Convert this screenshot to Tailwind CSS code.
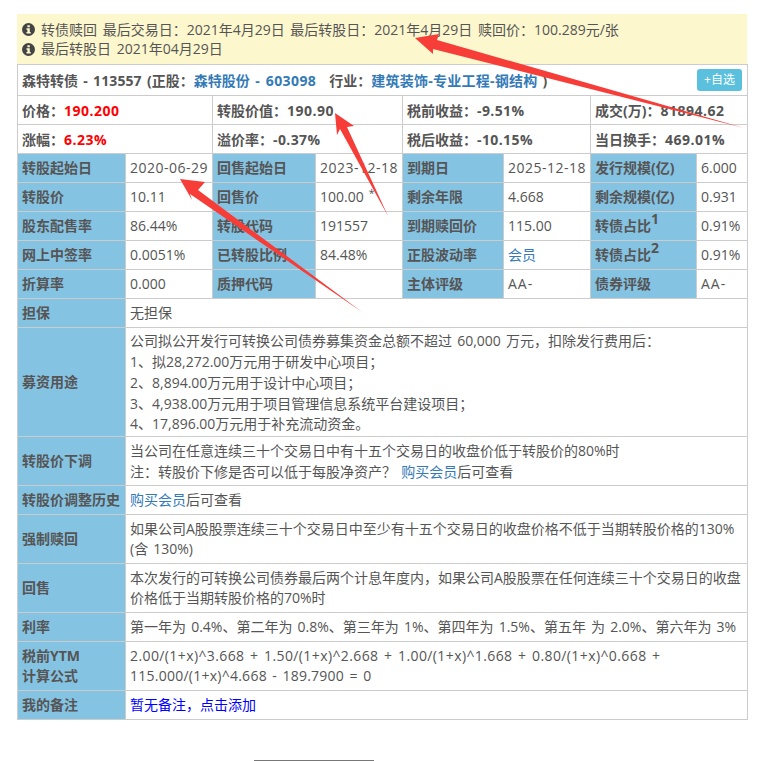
<!DOCTYPE html>
<html lang="zh-CN">
<head>
  <meta charset="UTF-8">
  <title>森特转债</title>
  <script src="https://cdn.jsdelivr.net/npm/@tailwindcss/browser@4"></script>
</head>
<body class="bg-white">
  <div class="relative h-[761px] overflow-hidden pt-[14px] pl-[17px] pr-[25px] font-['Open_Sans','Noto_Sans_CJK_SC',sans-serif] text-[14px] leading-[20px] text-[#555] [word-spacing:1.5px]">

    <!-- 公告 -->
    <div class="h-[50px] bg-[#fdf7cd] pl-[5px] pt-[5px] leading-[20px] [word-spacing:2px]">
      <div class="flex items-center gap-[6px] h-[20px]">
        <svg class="w-[13px] h-[13px]" viewBox="0 0 14 14"><circle cx="7" cy="7" r="7" fill="#444"/><rect x="5.8" y="2.4" width="2.6" height="2.2" fill="#fdf7cd"/><path d="M4.8 5.6h3.6v4.2h1v1.6H4.8V9.8h1V7.2h-1z" fill="#fdf7cd"/></svg>
        <span>转债赎回 最后交易日<span class="font-['Noto_Sans_CJK_TC']">：</span>2021年4月29日 最后转股日<span class="font-['Noto_Sans_CJK_TC']">：</span>2021年4月29日 赎回价<span class="font-['Noto_Sans_CJK_TC']">：</span>100.289元/张</span>
      </div>
      <div class="flex items-center gap-[6px] h-[20px]">
        <svg class="w-[13px] h-[13px]" viewBox="0 0 14 14"><circle cx="7" cy="7" r="7" fill="#444"/><rect x="5.8" y="2.4" width="2.6" height="2.2" fill="#fdf7cd"/><path d="M4.8 5.6h3.6v4.2h1v1.6H4.8V9.8h1V7.2h-1z" fill="#fdf7cd"/></svg>
        <span>最后转股日 2021年04月29日</span>
      </div>
    </div>

    <table class="w-[730px] table-fixed border-collapse">
      <colgroup>
        <col class="w-[108px]"><col class="w-[87px]"><col class="w-[103px]"><col class="w-[87px]">
        <col class="w-[101px]"><col class="w-[87px]"><col class="w-[106px]"><col class="w-[51px]">
      </colgroup>
      <tbody>
        <tr class="h-[31px]">
          <td colspan="8" class="border border-[#ccc] px-[4px] font-bold">
            <div class="flex items-center justify-between">
              <span>森特转债<span class="tracking-[0.1px]"> - 113557 (</span>正股<span class="font-['Noto_Sans_CJK_TC']">：</span><a class="text-[#337ab7]">森特股份<span class="tracking-[0.4px]"> - 603098</span></a><span class="inline-block w-[13px]"></span>行业<span class="font-['Noto_Sans_CJK_TC']">：</span><a class="text-[#337ab7] tracking-[0.25px]">建筑装饰-专业工程-钢结构</a> )</span>
              <button class="mr-[1px] h-[22px] w-[45px] rounded-[3px] bg-[#5bc0de] text-[12px] font-normal leading-[22px] text-white">+自选</button>
            </div>
          </td>
        </tr>
        <tr class="h-[29px] font-bold">
          <td colspan="2" class="border border-[#ccc] px-[4px]">价格<span class="font-['Noto_Sans_CJK_TC']">：</span><span class="text-[#f00] tracking-[0.5px]">190.200</span></td>
          <td colspan="2" class="border border-[#ccc] px-[4px]">转股价值<span class="font-['Noto_Sans_CJK_TC']">：</span><span class="tracking-[0.5px]">190.90</span></td>
          <td colspan="2" class="border border-[#ccc] px-[4px]">税前收益<span class="font-['Noto_Sans_CJK_TC']">：</span><span class="tracking-[0.4px]">-9.51%</span></td>
          <td colspan="2" class="border border-[#ccc] px-[4px]">成交(万)<span class="font-['Noto_Sans_CJK_TC']">：</span><span class="tracking-[0.5px]">81894.62</span></td>
        </tr>
        <tr class="h-[29px] font-bold">
          <td colspan="2" class="border border-[#ccc] px-[4px]">涨幅<span class="font-['Noto_Sans_CJK_TC']">：</span><span class="text-[#f00] tracking-[0.5px]">6.23%</span></td>
          <td colspan="2" class="border border-[#ccc] px-[4px]">溢价率<span class="font-['Noto_Sans_CJK_TC']">：</span><span class="tracking-[0.4px]">-0.37%</span></td>
          <td colspan="2" class="border border-[#ccc] px-[4px]">税后收益<span class="font-['Noto_Sans_CJK_TC']">：</span><span class="tracking-[0.4px]">-10.15%</span></td>
          <td colspan="2" class="border border-[#ccc] px-[4px]">当日换手<span class="font-['Noto_Sans_CJK_TC']">：</span><span class="tracking-[0.5px]">469.01%</span></td>
        </tr>
        <tr class="h-[29px]">
          <td class="border border-[#ccc] bg-[#85c3e3] px-[4px] font-bold">转股起始日</td>
          <td class="border border-[#ccc] px-[4px] tracking-[0.5px] whitespace-nowrap">2020-06-29</td>
          <td class="border border-[#ccc] bg-[#85c3e3] px-[4px] font-bold">回售起始日</td>
          <td class="border border-[#ccc] px-[4px] tracking-[0.5px] whitespace-nowrap">2023-12-18</td>
          <td class="border border-[#ccc] bg-[#85c3e3] px-[4px] font-bold">到期日</td>
          <td class="border border-[#ccc] px-[4px] tracking-[0.5px] whitespace-nowrap">2025-12-18</td>
          <td class="border border-[#ccc] bg-[#85c3e3] px-[4px] font-bold">发行规模(亿)</td>
          <td class="border border-[#ccc] px-[4px]">6.000</td>
        </tr>
        <tr class="h-[29px]">
          <td class="border border-[#ccc] bg-[#85c3e3] px-[4px] font-bold">转股价</td>
          <td class="border border-[#ccc] px-[4px]">10.11</td>
          <td class="border border-[#ccc] bg-[#85c3e3] px-[4px] font-bold">回售价</td>
          <td class="border border-[#ccc] px-[4px]">100.00 <sup>*</sup></td>
          <td class="border border-[#ccc] bg-[#85c3e3] px-[4px] font-bold">剩余年限</td>
          <td class="border border-[#ccc] px-[4px]">4.668</td>
          <td class="border border-[#ccc] bg-[#85c3e3] px-[4px] font-bold">剩余规模(亿)</td>
          <td class="border border-[#ccc] px-[4px]">0.931</td>
        </tr>
        <tr class="h-[29px]">
          <td class="border border-[#ccc] bg-[#85c3e3] px-[4px] font-bold">股东配售率</td>
          <td class="border border-[#ccc] px-[4px]">86.44%</td>
          <td class="border border-[#ccc] bg-[#85c3e3] px-[4px] font-bold">转股代码</td>
          <td class="border border-[#ccc] px-[4px]">191557</td>
          <td class="border border-[#ccc] bg-[#85c3e3] px-[4px] font-bold">到期赎回价</td>
          <td class="border border-[#ccc] px-[4px]">115.00</td>
          <td class="border border-[#ccc] bg-[#85c3e3] px-[4px] font-bold">转债占比<sup class="text-[14px]">1</sup></td>
          <td class="border border-[#ccc] px-[4px]">0.91%</td>
        </tr>
        <tr class="h-[29px]">
          <td class="border border-[#ccc] bg-[#85c3e3] px-[4px] font-bold">网上中签率</td>
          <td class="border border-[#ccc] px-[4px]">0.0051%</td>
          <td class="border border-[#ccc] bg-[#85c3e3] px-[4px] font-bold">已转股比例</td>
          <td class="border border-[#ccc] px-[4px]">84.48%</td>
          <td class="border border-[#ccc] bg-[#85c3e3] px-[4px] font-bold">正股波动率</td>
          <td class="border border-[#ccc] px-[4px]"><a class="text-[#337ab7]">会员</a></td>
          <td class="border border-[#ccc] bg-[#85c3e3] px-[4px] font-bold">转债占比<sup class="text-[14px]">2</sup></td>
          <td class="border border-[#ccc] px-[4px]">0.91%</td>
        </tr>
        <tr class="h-[29px]">
          <td class="border border-[#ccc] bg-[#85c3e3] px-[4px] font-bold">折算率</td>
          <td class="border border-[#ccc] px-[4px]">0.000</td>
          <td class="border border-[#ccc] bg-[#85c3e3] px-[4px] font-bold">质押代码</td>
          <td class="border border-[#ccc] px-[4px]"></td>
          <td class="border border-[#ccc] bg-[#85c3e3] px-[4px] font-bold">主体评级</td>
          <td class="border border-[#ccc] px-[4px] tracking-[1px]">AA-</td>
          <td class="border border-[#ccc] bg-[#85c3e3] px-[4px] font-bold">债券评级</td>
          <td class="border border-[#ccc] px-[4px] tracking-[1px]">AA-</td>
        </tr>
        <tr class="h-[29px]">
          <td class="border border-[#ccc] bg-[#85c3e3] px-[4px] font-bold">担保</td>
          <td colspan="7" class="border border-[#ccc] px-[4px]">无担保</td>
        </tr>
        <tr class="h-[109px]">
          <td class="border border-[#ccc] bg-[#85c3e3] px-[4px] font-bold">募资用途</td>
          <td colspan="7" class="border border-[#ccc] px-[4px]">公司拟公开发行可转换公司债券募集资金总额不超过 60,000 万元，扣除发行费用后<span class="font-['Noto_Sans_CJK_TC']">：</span><br>1、拟28,272.00万元用于研发中心项目<span class="font-['Noto_Sans_CJK_TC']">；</span><br>2、8,894.00万元用于设计中心项目<span class="font-['Noto_Sans_CJK_TC']">；</span><br>3、4,938.00万元用于项目管理信息系统平台建设项目<span class="font-['Noto_Sans_CJK_TC']">；</span><br>4、17,896.00万元用于补充流动资金。</td>
        </tr>
        <tr class="h-[49px]">
          <td class="border border-[#ccc] bg-[#85c3e3] px-[4px] font-bold">转股价下调</td>
          <td colspan="7" class="border border-[#ccc] px-[4px]">当公司在任意连续三十个交易日中有十五个交易日的收盘价低于转股价的80%时<br>注<span class="font-['Noto_Sans_CJK_TC']">：</span>转股价下修是否可以低于每股净资产<span class="font-['Noto_Sans_CJK_TC']">？</span> <a class="text-[#337ab7]">购买会员</a>后可查看</td>
        </tr>
        <tr class="h-[29px]">
          <td class="border border-[#ccc] bg-[#85c3e3] px-[4px] font-bold">转股价调整历史</td>
          <td colspan="7" class="border border-[#ccc] px-[4px]"><a class="text-[#337ab7]">购买会员</a>后可查看</td>
        </tr>
        <tr class="h-[49px]">
          <td class="border border-[#ccc] bg-[#85c3e3] px-[4px] font-bold">强制赎回</td>
          <td colspan="7" class="border border-[#ccc] px-[4px]">如果公司A股股票连续三十个交易日中至少有十五个交易日的收盘价格不低于当期转股价格的130%<br>(含 130%)</td>
        </tr>
        <tr class="h-[49px]">
          <td class="border border-[#ccc] bg-[#85c3e3] px-[4px] font-bold">回售</td>
          <td colspan="7" class="border border-[#ccc] px-[4px]">本次发行的可转换公司债券最后两个计息年度内，如果公司A股股票在任何连续三十个交易日的收盘价格低于当期转股价格的70%时</td>
        </tr>
        <tr class="h-[29px]">
          <td class="border border-[#ccc] bg-[#85c3e3] px-[4px] font-bold">利率</td>
          <td colspan="7" class="border border-[#ccc] px-[4px]">第一年为 0.4%、第二年为 0.8%、第三年为 1%、第四年为 1.5%、第五年 为 2.0%、第六年为 3%</td>
        </tr>
        <tr class="h-[49px]">
          <td class="border border-[#ccc] bg-[#85c3e3] px-[4px] font-bold">税前YTM<br>计算公式</td>
          <td colspan="7" class="border border-[#ccc] px-[4px]"><span class="tracking-[0.4px]">2.00/(1+x)^3.668 + 1.50/(1+x)^2.668 + 1.00/(1+x)^1.668 + 0.80/(1+x)^0.668 +</span><br><span class="tracking-[0.25px]">115.000/(1+x)^4.668 - 189.7900 = 0</span></td>
        </tr>
        <tr class="h-[29px]">
          <td class="border border-[#ccc] bg-[#85c3e3] px-[4px] font-bold">我的备注</td>
          <td colspan="7" class="border border-[#ccc] px-[4px] text-[#00f]">暂无备注，点击添加</td>
        </tr>
      </tbody>
    </table>

    <!-- 底部分隔线 -->
    <div class="mt-[40px] ml-[237px] w-[120px] border-t border-[#777]"></div>

    <!-- 截图上的红色箭头 -->
    <svg class="absolute left-0 top-0 w-[772px] h-[761px] pointer-events-none" viewBox="0 0 772 761">
      <polygon fill="#f63d38" points="415,38 439,34 437,40 744,128 433,49 433,54"/>
      <polygon fill="#f63d38" points="335,113 354,126 347,127 388,216 340,129 337,135"/>
      <polygon fill="#f63d38" points="180,179 205,182 198,190 362,312 190,194 192,200"/>
    </svg>
  </div>
</body>
</html>
